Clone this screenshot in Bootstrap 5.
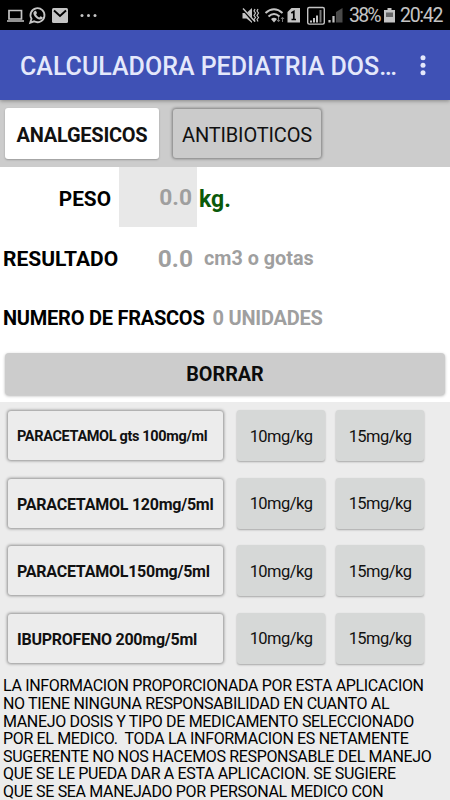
<!DOCTYPE html>
<html lang="es">
<head>
<meta charset="utf-8">
<meta name="viewport" content="width=device-width, initial-scale=1">
<title>Calculadora Pediatria Dosis</title>
<link href="https://cdn.jsdelivr.net/npm/bootstrap@5.3.0/dist/css/bootstrap.min.css" rel="stylesheet">
<style>
body{font-family:Roboto,"Liberation Sans",sans-serif;height:800px;overflow:hidden;background:#ececec;color:#000;line-height:1}
.status{height:30px;background:#000;color:#c4c4c4;padding:0 9px 0 7px}
.status svg{display:block;flex:none}
.pct,.clock{font-size:19.5px;line-height:30px;padding-top:2px}
.pct{width:35px;margin-left:4px;letter-spacing:-1.8px}
.clock{width:41px;margin-left:5px;letter-spacing:-1.3px}
.appbar{height:70px;background:#3f51b5;padding:3px 24px 0 20px;box-shadow:0 1px 4px rgba(0,0,0,.35);z-index:1}
.appbar h1{font-size:25px;font-weight:500;color:#e4e8fb;line-height:1.4}
.tabs{height:67px;background:#ccc;padding:8px 5px 0 5px}
.tabs .btn{height:51px;border:0;border-radius:3px;padding:2px 0 0;font-size:20px;color:#111}
.tabs .tab-on{width:154px;background:#fff;font-weight:700;letter-spacing:-.25px;box-shadow:0 1px 2px rgba(0,0,0,.25)}
.tabs .tab-off{width:148px;height:49px;margin:1px 0 0 14px;background:#cbcbcb;letter-spacing:-.15px;box-shadow:0 0 3px 1px rgba(0,0,0,.38)}
.fields{height:186px;font-weight:700;font-size:20px}
.fields>div{height:60px}
.fields .off{color:#9f9f9f}
.peso{width:111px;font-size:20.8px}
.weight{width:78px;height:60px;margin-left:8px;background:#e8e8e8;padding:2px 5px 0 0;font-size:22.8px}
.unit{color:#0a5a0a;font-size:23px;margin-left:2px}
.result{padding:4px 0 0 3px}
.reslabel{font-size:21px;width:116px}
.resval{width:74px;font-size:24.5px}
.cm{font-size:19.8px;margin-left:11px}
.bottles{padding:2px 0 0 3px;letter-spacing:-.24px}
.erase{height:42px;margin:0 5px 7px;border:0;border-radius:4px;background:#ccc!important;font-size:19.8px;font-weight:700;color:#0c0c0c;padding:2px 0 0;box-shadow:0 1px 3px rgba(0,0,0,.3)}
.doses{padding:8px 0 0 8px}
.doses .line{height:67.6px;gap:11px}
.doses .btn{height:51px;border:0;border-radius:3px;padding:3px 0 0;font-size:16.5px;color:#111}
.doses .drug{width:215px;height:49px;margin:1px 3px 0 0;padding-left:9px;text-align:left;font-weight:700;font-size:16px;letter-spacing:-.24px;background:#ececec;box-shadow:0 0 3px 1px rgba(0,0,0,.38)}
.doses .dose{width:88px;background:#d6d8d7;letter-spacing:-.55px;box-shadow:0 1px 2px rgba(0,0,0,.3)}
.doses .gts{font-size:14.5px;letter-spacing:-.35px}
.legal{font-size:16px;line-height:17.6px;letter-spacing:-.34px;padding-left:3px;white-space:pre;margin:-3px 0 0}
.tx{display:inline-block;white-space:pre}
</style>
<script src="https://cdn.jsdelivr.net/npm/bootstrap@5.3.0/dist/js/bootstrap.bundle.min.js"></script>
</head>
<body>
<header class="status d-flex align-items-center">
<svg width="100" height="30" viewBox="7 0 100 30" fill="none" stroke="#c4c4c4">
<path d="M9 10.500h12.500v8.500H9zM7 21h17" stroke-width="1.700"/>
<path d="M30.200 22.700l1.300-3.900a7 7 0 1 1 2.600 2.500z" stroke-width="1.800"/>
<path d="M34.500 11.300c.8-.9 1.500-.5 1.700 0l.8 1.800-.9 1.400c.8 1.500 1.700 2.300 3.200 3l1.200-1.300 2.100 1.100c.4.8-.7 2.300-2.200 2.300-3.300-.2-7.200-4.200-7-6.700.1-.7.5-1.200 1.100-1.600z" fill="#c4c4c4" stroke="none"/>
<rect x="52" y="8" width="16" height="15" rx="1.500" fill="#c4c4c4" stroke="none"/>
<path d="M54 10.500l6 5.500 6-5.500" stroke="#000" stroke-width="1.900"/>
<g fill="#c4c4c4" stroke="none"><circle cx="82" cy="15.500" r="1.500"/><circle cx="88.500" cy="15.500" r="1.500"/><circle cx="95" cy="15.500" r="1.500"/></g>
</svg>
<svg class="ms-auto" width="104" height="30" viewBox="241 0 104 30" fill="none" stroke="#c4c4c4">
<path d="M242.500 13h4l5.500-5v15l-5.500-4.500h-4z" fill="#c4c4c4" stroke="none"/>
<path d="M242 8l12 14" stroke="#000" stroke-width="2.600"/><path d="M243 8.500l12 13" stroke-width="1.400"/>
<path d="M255 9l-1 2 1.500 2-1.500 2.500 1.500 2-1.500 2 1 2M258 9l-1 2 1.500 2-1.500 2.500 1.500 2-1.500 2 1 2" stroke-width="1.200"/>
<path d="M265.500 13q8.500-7.500 17 0M268.500 16.500q5.500-5 11 0" stroke-width="2"/><path d="M271 19q3-2.500 6 0l-3 3.500z" fill="#c4c4c4" stroke="none"/>
<path d="M278.500 17v4.500m-1.500-1.500l1.500 1.800 1.500-1.800M282.500 22v-4.500m-1.500 1.500l1.500-1.800 1.500 1.800" stroke="#777" stroke-width="1"/>
<path d="M291.500 8h8.500v14.500h-12.500V12z" fill="#c4c4c4" stroke="none"/><path d="M291.300 13l2.500-1.500v8M291.500 19.500h4.500" stroke="#000" stroke-width="1.700"/>
<rect x="307.700" y="7.500" width="16.600" height="16.600" rx="1.500" stroke-width="1.400"/>
<path d="M311 22.500v-2M314 22.500v-4.500M317 22.500v-7" stroke-width="2"/><path d="M320.500 22.500V10" stroke="#777" stroke-width="2"/>
<path d="M329.500 22.500v-2.500M333.500 22.500v-6.500" stroke-width="2.200"/><path d="M336 22.500V12l6.500-4v14.500z" fill="#4a4a4a" stroke="none"/>
</svg>
<span class="pct"><span class="tx">38%</span></span>
<svg width="11" height="30" viewBox="0 0 11 30"><path d="M3.500 8h4v2H11v12.500H0V10h3.500z" fill="#c4c4c4"/><path d="M2 12.500h7V17H2z" fill="#666"/></svg>
<span class="clock"><span class="tx">20:42</span></span>
</header>
<nav class="appbar d-flex align-items-center justify-content-between position-relative">
<h1 class="m-0"><span class="tx">CALCULADORA PEDIATRIA DOS…</span></h1>
<svg width="6" height="24" viewBox="0 0 6 24" fill="#e4e8fb"><circle cx="3" cy="2.700" r="2.500"/><circle cx="3" cy="10.200" r="2.500"/><circle cx="3" cy="17.700" r="2.500"/></svg>
</nav>
<div class="tabs d-flex align-items-start">
<button class="btn tab-on"><span class="tx">ANALGESICOS</span></button>
<button class="btn tab-off"><span class="tx">ANTIBIOTICOS</span></button>
</div>
<section class="bg-white overflow-hidden">
<div class="fields">
<div class="d-flex align-items-center"><div class="peso text-end pt-1"><span class="tx">PESO</span></div><div class="weight off d-flex align-items-center justify-content-end"><span class="tx">0.0</span></div><div class="unit pt-1"><span class="tx">kg.</span></div></div>
<div class="result d-flex align-items-center"><span class="tx reslabel">RESULTADO</span><div class="resval off text-end"><span class="tx">0.0</span></div><div class="cm off"><span class="tx">cm3 o gotas</span></div></div>
<div class="bottles d-flex align-items-center"><span class="tx">NUMERO DE FRASCOS</span><span class="off ms-2 tx">0 UNIDADES</span></div>
</div>
<div class="d-grid"><button class="btn erase"><span class="tx">BORRAR</span></button></div>
</section>
<main class="doses">
<div class="line d-flex align-items-start"><button class="btn drug gts"><span class="tx">PARACETAMOL gts 100mg/ml</span></button><button class="btn dose">10mg/kg</button><button class="btn dose">15mg/kg</button></div>
<div class="line d-flex align-items-start"><button class="btn drug"><span class="tx">PARACETAMOL 120mg/5ml</span></button><button class="btn dose">10mg/kg</button><button class="btn dose">15mg/kg</button></div>
<div class="line d-flex align-items-start"><button class="btn drug"><span class="tx">PARACETAMOL150mg/5ml</span></button><button class="btn dose">10mg/kg</button><button class="btn dose">15mg/kg</button></div>
<div class="line d-flex align-items-start"><button class="btn drug"><span class="tx">IBUPROFENO 200mg/5ml</span></button><button class="btn dose">10mg/kg</button><button class="btn dose">15mg/kg</button></div>
</main>
<p class="legal">LA INFORMACION PROPORCIONADA POR ESTA APLICACION
NO TIENE NINGUNA RESPONSABILIDAD EN CUANTO AL
MANEJO DOSIS Y TIPO DE MEDICAMENTO SELECCIONADO
POR EL MEDICO.  TODA LA INFORMACION ES NETAMENTE
SUGERENTE NO NOS HACEMOS RESPONSABLE DEL MANEJO
QUE SE LE PUEDA DAR A ESTA APLICACION. SE SUGIERE
QUE SE SEA MANEJADO POR PERSONAL MEDICO CON</p>
</body>
</html>
